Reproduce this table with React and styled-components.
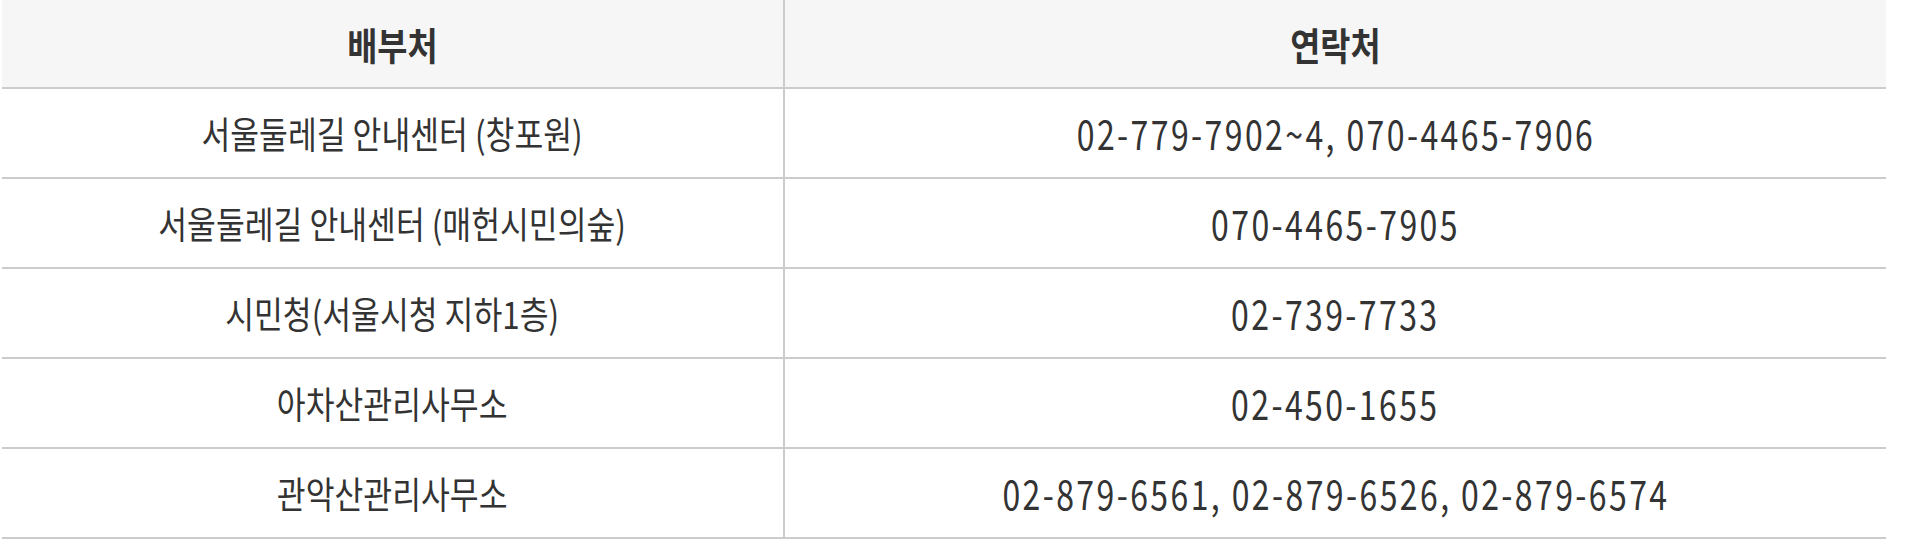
import React from "react";
import styled, { createGlobalStyle } from "styled-components";

const GlobalStyle = createGlobalStyle`
  html, body {
    margin: 0;
    padding: 0;
    background: #ffffff;
  }
  body {
    font-family: "Noto Sans CJK KR", "Noto Sans", sans-serif;
    color: #333333;
  }
`;

const Wrapper = styled.div`
  padding-left: 2px;
`;

const Table = styled.table`
  width: 1884px;
  border-collapse: collapse;
  table-layout: fixed;
`;

const HeadCell = styled.th`
  height: 87px;
  padding: 0;
  background: #f6f6f6;
  border-bottom: 2px solid #cccccc;
  border-left: ${(p) => (p.$divider ? "2px solid #cccccc" : "none")};
  text-align: center;
  vertical-align: middle;
  font-weight: 700;
  font-size: 38px;
  color: #333333;
`;

const Cell = styled.td`
  height: 88px;
  padding: 0;
  border-bottom: 2px solid #cccccc;
  border-left: ${(p) => (p.$divider ? "2px solid #cccccc" : "none")};
  text-align: center;
  vertical-align: middle;
  font-weight: 400;
  font-size: ${(p) => (p.$numeric ? "40px" : "37px")};
  letter-spacing: ${(p) => (p.$numeric ? "3px" : "0")};
  color: #333333;
`;

const Squeeze = styled.span`
  display: inline-block;
  white-space: nowrap;
  line-height: 1;
  transform: scaleX(${(p) => p.$sx || 0.847});
`;

const rows = [
  ["서울둘레길 안내센터 (창포원)", "02-779-7902~4, 070-4465-7906"],
  ["서울둘레길 안내센터 (매헌시민의숲)", "070-4465-7905"],
  ["시민청(서울시청 지하1층)", "02-739-7733"],
  ["아차산관리사무소", "02-450-1655"],
  ["관악산관리사무소", "02-879-6561, 02-879-6526, 02-879-6574"],
];

export default function App() {
  return (
    <>
      <GlobalStyle />
      <Wrapper>
        <Table>
          <colgroup>
            <col style={{ width: "782px" }} />
            <col />
          </colgroup>
          <thead>
            <tr>
              <HeadCell>
                <Squeeze $sx={0.862}>배부처</Squeeze>
              </HeadCell>
              <HeadCell $divider>
                <Squeeze $sx={0.862}>연락처</Squeeze>
              </HeadCell>
            </tr>
          </thead>
          <tbody>
            {rows.map(([place, phone]) => (
              <tr key={place}>
                <Cell>
                  <Squeeze>{place}</Squeeze>
                </Cell>
                <Cell $divider $numeric>
                  <Squeeze $sx={0.8}>{phone}</Squeeze>
                </Cell>
              </tr>
            ))}
          </tbody>
        </Table>
      </Wrapper>
    </>
  );
}
